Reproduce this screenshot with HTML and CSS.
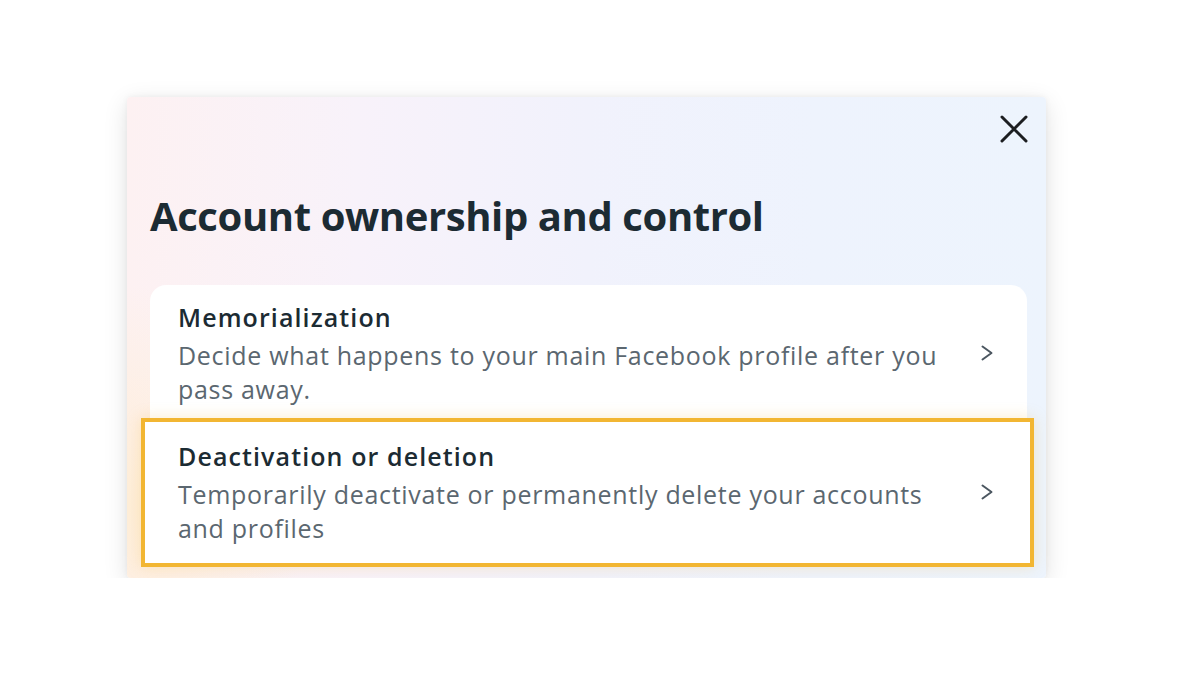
FILE: index.html
```html
<!DOCTYPE html>
<html lang="en">
<head>
    <meta charset="UTF-8">
    <meta name="viewport" content="width=device-width, initial-scale=1.0">
    <title>Account ownership and control</title>
    <link rel="stylesheet" href="styles.css">
</head>
<body>

    <div class="panel">
        <div class="panel-top">
            <button class="close-btn" aria-label="Close">
                <svg width="28" height="28" viewBox="0 0 28 28">
                    <path d="M2 2 L26 26 M26 2 L2 26" stroke="#1c1e21" stroke-width="3" stroke-linecap="round" fill="none"/>
                </svg>
            </button>
        </div>

        <h1 class="title">Account ownership and control</h1>

        <!-- List of options -->
        <div class="options">
            <div class="option">
                <div class="option-text">
                    <h3>Memorialization</h3>
                    <p>Decide what happens to your main Facebook profile after you pass away.</p>
                </div>
                <svg class="chevron" width="12" height="16" viewBox="0 0 12 16">
                    <path d="M1.5 1.5 L10.5 8 L1.5 14.5" stroke="#4b5660" stroke-width="2" fill="none" stroke-linecap="round" stroke-linejoin="round"/>
                </svg>
            </div>

            <div class="option highlight">
                <div class="option-text">
                    <h3>Deactivation or deletion</h3>
                    <p>Temporarily deactivate or permanently delete your accounts and profiles</p>
                </div>
                <svg class="chevron" width="12" height="16" viewBox="0 0 12 16">
                    <path d="M1.5 1.5 L10.5 8 L1.5 14.5" stroke="#4b5660" stroke-width="2" fill="none" stroke-linecap="round" stroke-linejoin="round"/>
                </svg>
            </div>
        </div>
    </div>

</body>
</html>
```

FILE: styles.css
```css
body {
    margin: 0;
    padding: 0;
    background-color: #fff;
    font-family: "Open Sans", Arial, sans-serif;
    color: #1c2b33;
}
.panel {
    width: 919px;
    margin: 97px 0 0 127px;
    padding: 18px 19px 11px 23px;
    box-sizing: border-box;
    border-radius: 4px;
    background:
        radial-gradient(ellipse 180px 220px at 0% 85%, rgba(255, 236, 200, 0.6), rgba(255, 236, 200, 0)),
        linear-gradient(90deg, #fdf1f2 0%, #f8f2fa 25%, #f1f2fc 50%, #eef3fd 75%, #edf4fd 100%);
    box-shadow: 0 6px 24px rgba(0, 0, 0, 0.12), 0 0 6px rgba(0, 0, 0, 0.05);
}
.panel-top {
    display: flex;
    justify-content: flex-end;
    height: 28px;
}
.close-btn {
    border: none;
    background: none;
    padding: 0;
    margin-right: -1px;
    width: 28px;
    height: 28px;
    cursor: pointer;
}
.title {
    margin: 47px 0 0 0;
    font-size: 40px;
    font-weight: 700;
    line-height: 52px;
    letter-spacing: -0.4px;
    color: #1c2b33;
}
.options {
    margin-top: 43px;
    background: linear-gradient(180deg, #fff 0%, #fff 65%, #fff8e6 100%);
    border-radius: 16px 16px 0 0;
}
.option {
    display: flex;
    align-items: center;
    padding: 14px 34px 12px 28px;
}
.option-text {
    flex: 1;
}
.option h3 {
    margin: 0;
    font-size: 25px;
    font-weight: 600;
    line-height: 36px;
    letter-spacing: 1.1px;
    color: #1c2b33;
}
.option p {
    margin: 3px 0 0 0;
    font-size: 25px;
    line-height: 34px;
    letter-spacing: 0.7px;
    color: #5b6770;
}
.chevron {
    margin-left: 25px;
}
.highlight {
    margin: 0 -7px 0 -9px;
    border: 4px solid #f2b632;
    background-color: #fff;
    padding: 16px 37px 18px 33px;
    box-shadow: 0 0 14px rgba(242, 182, 50, 0.25);
}
```
